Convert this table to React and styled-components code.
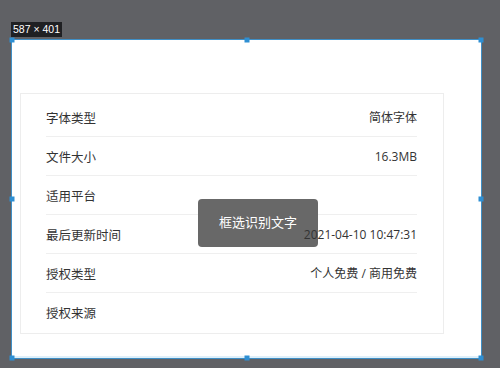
import styled, { createGlobalStyle } from "styled-components";

const GlobalStyle = createGlobalStyle`
  html, body {
    margin: 0;
    padding: 0;
    background: #606165;
  }
  * { box-sizing: border-box; }
`;

const rows = [
  { label: "字体类型", value: "简体字体" },
  { label: "文件大小", value: "16.3MB" },
  { label: "适用平台", value: "" },
  { label: "最后更新时间", value: "2021-04-10 10:47:31" },
  { label: "授权类型", value: "个人免费 / 商用免费" },
  { label: "授权来源", value: "" },
];

// resize grips: corners and edge midpoints, in percent of the frame
const handles = [
  { x: 0, y: 0 }, { x: 50, y: 0 }, { x: 100, y: 0 },
  { x: 0, y: 50 }, { x: 100, y: 50 },
  { x: 0, y: 100 }, { x: 50, y: 100 }, { x: 100, y: 100 },
];

const Page = styled.div`
  width: 500px;
  height: 368px;
  background: #606165;
  display: flex;
  align-items: flex-start;
  padding: 39px 0 0 11px;
  font-family: "Noto Sans CJK SC", "Noto Sans", sans-serif;
`;

const Frame = styled.div`
  position: relative;
  display: flex;
  flex-direction: column;
  align-items: flex-start;
  width: 471px;
  height: 320px;
  border: 1px solid #3f8fc6;
  box-shadow: inset 0 -2px 0 #dff0fa;
  background: #fff;
  padding: 53px 0 0 8px;
`;

const SizeTag = styled.div`
  position: absolute;
  left: -1px;
  top: -18px;
  height: 15px;
  padding: 0 2px;
  background: #1f2023;
  color: #fff;
  font-family: "Liberation Sans", Arial, sans-serif;
  font-size: 10.5px;
  line-height: 15px;
`;

const Handle = styled.span`
  position: absolute;
  width: 5px;
  height: 5px;
  background: #2e8fd3;
  transform: translate(-50%, -50%);
  left: ${(p) => p.$x}%;
  top: ${(p) => p.$y}%;
`;

const Card = styled.div`
  display: flex;
  flex-direction: column;
  width: 424px;
  height: 241px;
  border: 1px solid #ededed;
  padding: 4px 26px 0 25px;
`;

const Row = styled.div`
  display: flex;
  align-items: center;
  justify-content: space-between;
  height: 39px;
  border-bottom: 1px solid #efefef;
  font-size: 12.5px;
  color: #333;

  &:last-child {
    border-bottom: none;
  }
`;

/* values sit above the floating hint box */
const Value = styled.span`
  position: relative;
  z-index: 2;
  color: #333;
  font-family: "Open Sans", "Noto Sans CJK SC", sans-serif;
  font-size: 12px;
`;

const Toast = styled.div`
  position: absolute;
  z-index: 1;
  left: 186px;
  top: 159px;
  width: 120px;
  height: 48px;
  border-radius: 4px;
  background: #686868;
  color: #fff;
  font-size: 13px;
  display: flex;
  align-items: center;
  justify-content: center;
  padding-bottom: 3px;
`;

export default function App() {
  return (
    <>
      <GlobalStyle />
      <Page>
        <Frame>
          <SizeTag>587 × 401</SizeTag>
          {handles.map((h, i) => (
            <Handle key={i} $x={h.x} $y={h.y} />
          ))}
          <Card>
            {rows.map((r) => (
              <Row key={r.label}>
                <span>{r.label}</span>
                <Value>{r.value}</Value>
              </Row>
            ))}
          </Card>
          <Toast>框选识别文字</Toast>
        </Frame>
      </Page>
    </>
  );
}
